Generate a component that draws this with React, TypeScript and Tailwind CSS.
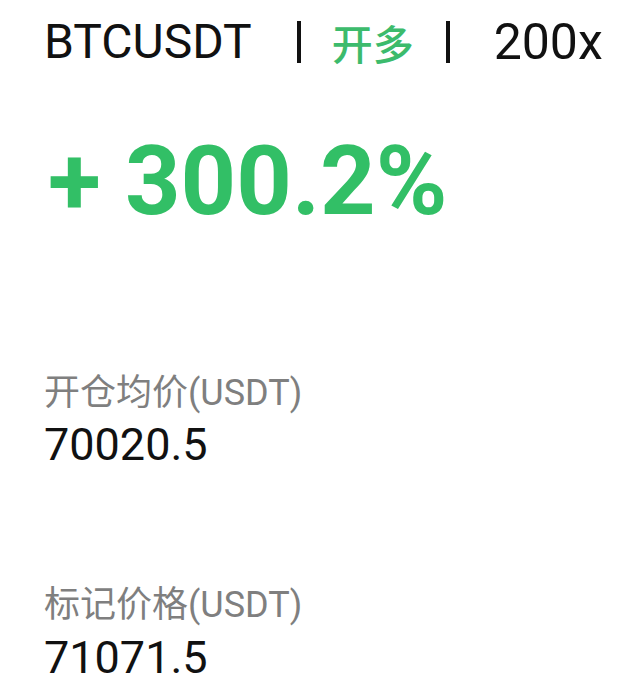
import React from 'react';

const font = "font-['Roboto','Noto_Sans_CJK_SC',sans-serif]";

function Field({ label, value, valueClass }: { label: string; value: string; valueClass: string }) {
  return (
    <div className="flex flex-col">
      <div className="text-[36px] leading-none text-[#7f7f7f]">{label}</div>
      <div className={`text-[45px] leading-none text-[#111111] ${valueClass}`}>{value}</div>
    </div>
  );
}

export default function App() {
  return (
    <div className={`w-[624px] h-[693px] bg-white overflow-hidden pl-[44px] pt-[19px] ${font}`}>
      {/* header */}
      <div className="flex items-center h-[46px]">
        <span className="text-[48px] leading-none text-[#111111]">BTCUSDT</span>
        <div className="ml-[45px] w-[4px] h-[42px] bg-[#111111]" />
        <span className="ml-[31px] text-[41px] leading-none font-medium text-[#3cbb6c] font-['Noto_Sans_CJK_SC',sans-serif]">开多</span>
        <div className="ml-[32px] w-[4px] h-[42px] bg-[#111111]" />
        <span className="ml-[44px] text-[50px] leading-none text-[#111111]">200x</span>
      </div>

      {/* profit */}
      <div className="mt-[68px] ml-[4px] text-[97px] leading-none font-bold text-[#32bf66]">+ 300.2%</div>

      <div className="mt-[145px]">
        <Field label="开仓均价(USDT)" value="70020.5" valueClass="mt-[11px]" />
      </div>
      <div className="mt-[120px]">
        <Field label="标记价格(USDT)" value="71071.5" valueClass="mt-[12px]" />
      </div>
    </div>
  );
}
